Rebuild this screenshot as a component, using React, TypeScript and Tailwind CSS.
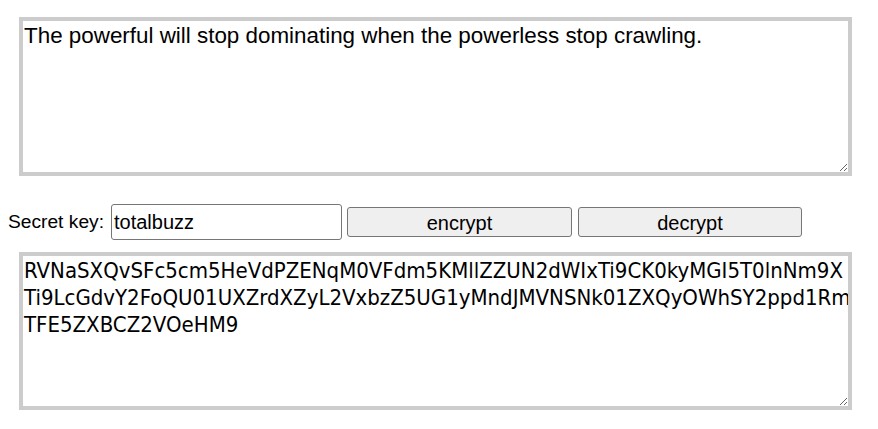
import { useState } from "react";

const CIPHER =
  "RVNaSXQvSFc5cm5HeVdPZENqM0VFdm5KMllZZUN2dWIxTi9CK0kyMGI5T0lnNm9X\nTi9LcGdvY2FoQU01UXZrdXZyL2VxbzZ5UG1yMndJMVNSNk01ZXQyOWhSY2ppd1Rm\nTFE5ZXBCZ2VOeHM9";

export default function App() {
  const [plain, setPlain] = useState("The powerful will stop dominating when the powerless stop crawling.");
  const [key, setKey] = useState("totalbuzz");
  const [cipher, setCipher] = useState(CIPHER);

  return (
    <div className="flex w-[878px] flex-col bg-white pt-[17px] font-['Liberation_Sans',Arial,sans-serif] text-black">
      <textarea
        value={plain}
        onChange={(e) => setPlain(e.target.value)}
        className="ml-[19px] h-[159px] w-[833px] resize border-4 border-[#cccccc] px-[1px] py-[2px] text-[22.4px] leading-[25px] outline-none"
      />

      {/* key + actions */}
      <div className="mt-[28px] flex items-center pl-[8px]">
        <label className="w-[97px] whitespace-nowrap text-[19.2px]">Secret key:</label>
        <input
          value={key}
          onChange={(e) => setKey(e.target.value)}
          className="ml-[6px] h-[36px] w-[231px] rounded-[3px] border border-[#767676] px-[2px] text-[20px] outline-none"
        />
        <button className="ml-[5px] h-[30px] w-[225px] rounded-[3px] border border-[#767676] bg-[#efefef] text-[20px]">
          encrypt
        </button>
        <button className="ml-[6px] h-[30px] w-[224px] rounded-[3px] border border-[#767676] bg-[#efefef] text-[20px]">
          decrypt
        </button>
      </div>

      <textarea
        value={cipher}
        onChange={(e) => setCipher(e.target.value)}
        wrap="off"
        className="ml-[19px] mt-[12px] h-[158px] w-[833px] resize overflow-hidden whitespace-pre border-4 border-[#cccccc] px-[1px] py-[1px] font-['DejaVu_Sans_Condensed','DejaVu_Sans',sans-serif] text-[22px] leading-[27px] outline-none"
      />
    </div>
  );
}
